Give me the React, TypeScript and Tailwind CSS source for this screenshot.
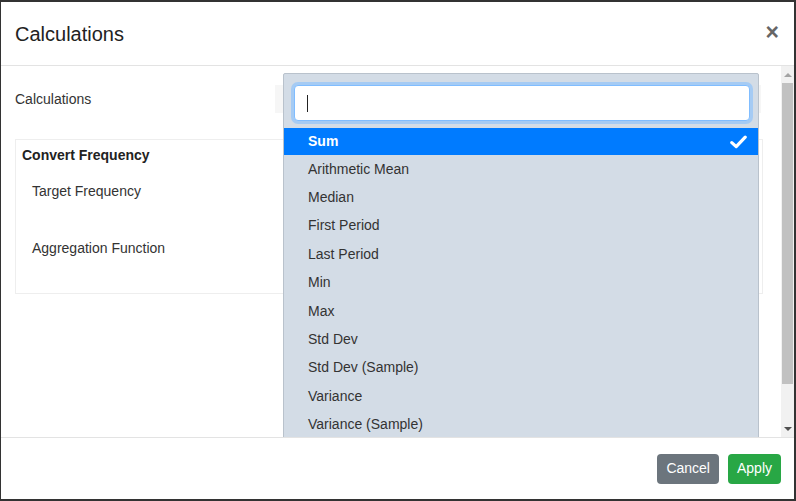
import React from "react";

const items = [
  "Sum",
  "Arithmetic Mean",
  "Median",
  "First Period",
  "Last Period",
  "Min",
  "Max",
  "Std Dev",
  "Std Dev (Sample)",
  "Variance",
  "Variance (Sample)",
];

export default function App() {
  return (
    <div
      className="w-[796px] h-[501px] bg-white border-[#333] border-t-2 border-l border-r-2 border-b-2 flex flex-col overflow-hidden"
      style={{ fontFamily: '"Liberation Sans", Arial, sans-serif' }}
    >
      {/* Header */}
      <div className="h-[64px] shrink-0 border-b border-[#e3e3e3] flex items-center justify-between pl-[14px] pr-[15px]">
        <div className="text-[20px] text-[#222] leading-[30px]">Calculations</div>
        <div className="text-[23px] font-bold text-[#666] leading-none -mt-[3px]">×</div>
      </div>

      {/* Body */}
      <div className="h-[371px] shrink-0 flex overflow-hidden">
        <div className="relative flex-1 overflow-hidden">
          <div className="pl-[14px] pr-[18px] pt-[24px]">
            <div className="flex items-center h-[18px] text-[14px] text-[#333]">Calculations</div>
            <div className="mt-[31px] border border-[#eeeeee] h-[155px] pl-[6px]">
              <div className="mt-[7px] text-[14px] font-bold text-[#222] leading-[16px]">Convert Frequency</div>
              <div className="pl-[10px] text-[14px] text-[#333]">
                <div className="mt-[20px] leading-[16px]">Target Frequency</div>
                <div className="mt-[41px] leading-[16px]">Aggregation Function</div>
              </div>
            </div>
          </div>

          {/* faint select field behind dropdown */}
          <div className="absolute left-[274px] top-[19px] w-[486px] h-[28px] bg-[#f6f6f6]" />

          {/* Dropdown */}
          <div className="absolute left-[282px] top-[7px] w-[476px] h-[380px] bg-[#d3dce6] border border-[#b9c2cc] rounded-t-[2px]">
            <div className="pl-[10px] pr-[8px] pt-[11px] pb-[7px]">
              <div className="h-[36px] bg-white border border-[#80bdff] rounded-[4px] shadow-[0_0_0_3px_rgba(128,189,255,0.55)] flex items-center pl-[12px]">
                <div className="w-[1px] h-[17px] bg-[#222]" />
              </div>
            </div>
            <div>
              {items.map((it, i) =>
                i === 0 ? (
                  <div
                    key={it}
                    className="h-[27px] bg-[#007bff] text-white text-[14px] font-bold flex items-center justify-between pl-[24px] pr-[11px]"
                  >
                    <span>{it}</span>
                    <svg width="17" height="14" viewBox="0 0 17 14">
                      <path
                        d="M1.8 7.6 L6.2 11.6 L15.2 2.2"
                        fill="none"
                        stroke="#fff"
                        strokeWidth="3.2"
                        strokeLinecap="round"
                        strokeLinejoin="round"
                      />
                    </svg>
                  </div>
                ) : (
                  <div
                    key={it}
                    className="h-[28.4px] text-[14px] text-[#333] flex items-center pl-[24px]"
                  >
                    {it}
                  </div>
                )
              )}
            </div>
          </div>
        </div>

        {/* Scrollbar */}
        <div className="w-[13px] shrink-0 bg-[#f1f1f1] flex flex-col">
          <div className="h-[17px] flex items-center justify-center">
            <div className="w-0 h-0 border-l-[4px] border-r-[4px] border-b-[4px] border-l-transparent border-r-transparent border-b-[#a3a3a3]" />
          </div>
          <div className="h-[301px] mx-[1px] bg-[#c1c1c1]" />
          <div className="flex-1" />
          <div className="h-[17px] flex items-center justify-center">
            <div className="w-0 h-0 border-l-[4px] border-r-[4px] border-t-[4px] border-l-transparent border-r-transparent border-t-[#505050]" />
          </div>
        </div>
      </div>

      {/* Footer */}
      <div className="flex-1 border-t border-[#e3e3e3] flex items-center justify-end gap-[9px] pr-[13px]">
        <div className="h-[30px] px-[9px] rounded-[4px] bg-[#6c757d] text-white text-[14px] flex items-center">Cancel</div>
        <div className="h-[30px] px-[9px] rounded-[4px] bg-[#28a745] text-white text-[14px] flex items-center">Apply</div>
      </div>
    </div>
  );
}
